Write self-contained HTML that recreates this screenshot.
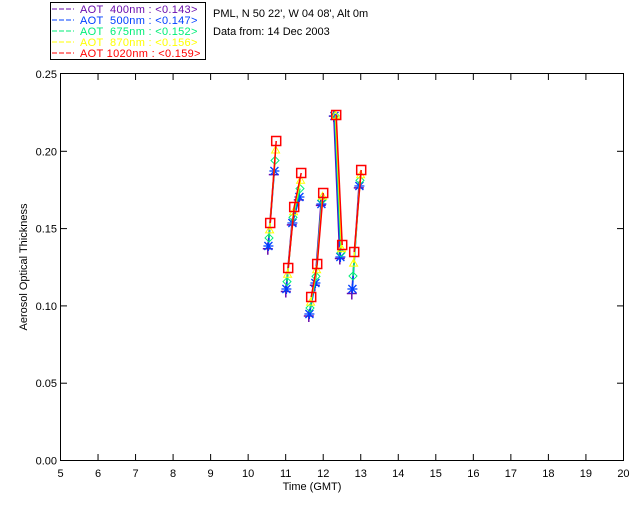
<!DOCTYPE html>
<html><head><meta charset="utf-8"><style>
html,body{margin:0;padding:0;background:#fff;width:640px;height:512px;overflow:hidden}
svg{display:block}
text{font-family:"Liberation Sans",sans-serif;font-size:11px}
.lg text{letter-spacing:0.3px}
</style></head><body>
<svg id="s" width="640" height="512" viewBox="0 0 640 512" xmlns="http://www.w3.org/2000/svg">
<rect x="50.5" y="2.5" width="155" height="57" fill="none" stroke="#000"/>
<g class="lg" font-size="11">
<line x1="52" y1="9" x2="74" y2="9" stroke="#6a0dad" stroke-dasharray="5,2"/><text x="80" y="13" fill="#6a0dad" xml:space="preserve">AOT  400nm : &lt;0.143&gt;</text>
<line x1="52" y1="20" x2="74" y2="20" stroke="#0040ff" stroke-dasharray="5,2"/><text x="80" y="24" fill="#0040ff" xml:space="preserve">AOT  500nm : &lt;0.147&gt;</text>
<line x1="52" y1="31" x2="74" y2="31" stroke="#00ee77" stroke-dasharray="5,2"/><text x="80" y="35" fill="#00ee77" xml:space="preserve">AOT  675nm : &lt;0.152&gt;</text>
<line x1="52" y1="42" x2="74" y2="42" stroke="#ffff00" stroke-dasharray="5,2"/><text x="80" y="46" fill="#ffff00" xml:space="preserve">AOT  870nm : &lt;0.156&gt;</text>
<line x1="52" y1="53" x2="74" y2="53" stroke="#ff0000" stroke-dasharray="5,2"/><text x="80" y="57" fill="#ff0000" xml:space="preserve">AOT 1020nm : &lt;0.159&gt;</text>
</g>
<text x="213" y="17">PML, N 50 22', W 04 08', Alt 0m</text>
<text x="213" y="35">Data from: 14 Dec 2003</text>
<rect x="60.5" y="73.5" width="563" height="387" fill="none" stroke="#000"/>
<g id="ax"></g>
<text x="312" y="490" text-anchor="middle">Time (GMT)</text>
<text transform="translate(27,267) rotate(-90)" text-anchor="middle">Aerosol Optical Thickness</text>
<g id="d"></g>
</svg>
<script>
var ns="http://www.w3.org/2000/svg",ax=document.getElementById('ax'),d=document.getElementById('d');
function el(t,a,p){var e=document.createElementNS(ns,t);for(var k in a)e.setAttribute(k,a[k]);(p||d).appendChild(e);return e;}
for(var h=5;h<=20;h++){var x=60.5+(h-5)*37.53;
 if(h>5&&h<20){el('line',{x1:x,y1:460.5,x2:x,y2:454,stroke:'#000'},ax);el('line',{x1:x,y1:73.5,x2:x,y2:80,stroke:'#000'},ax);}
 var t=el('text',{x:x,y:477,'text-anchor':'middle'},ax);t.textContent=h;}
for(var i=0;i<=5;i++){var y=460.5-i*77.3;
 if(i>0&&i<5){el('line',{x1:60.5,y1:y,x2:67,y2:y,stroke:'#000'},ax);el('line',{x1:623.5,y1:y,x2:617,y2:y,stroke:'#000'},ax);}
 var t=el('text',{x:57,y:y+4,'text-anchor':'end'},ax);t.textContent=(i*0.05).toFixed(2);}
var groups=[
 [[269,223,246],[275,141,171]],
 [[287,268,289],[293,207,223],[300,173,197]],
 [[310,297,314],[316,264,283],[322,193,204]],
 [[335,115,116],[341,245,257]],
 [[353,252,289],[360,170,186]]];
var cols=[['#6a0dad',-0.12,'plus'],['#0040ff',0,'star'],['#00ee77',0.35,'dia'],['#ffff00',0.7,'tri'],['#ff0000',1,'sq']];
cols.forEach(function(c,ci){
 groups.forEach(function(g){
  var pts=g.map(function(p){return [p[0]+(ci-2)*0.6,p[2]+(p[1]-p[2])*c[1]];});
  el('polyline',{points:pts.map(function(p){return p.join(',')}).join(' '),fill:'none',stroke:c[0],'stroke-width':1.5});
  pts.forEach(function(p){var x=p[0],y=p[1],s=c[0];
   if(c[2]=='plus')el('path',{d:'M'+(x-5)+' '+y+'h10M'+x+' '+(y-6)+'v12',stroke:s,'stroke-width':1.5,fill:'none'});
   if(c[2]=='star')el('path',{d:'M'+(x-5)+' '+y+'h10M'+x+' '+(y-5)+'v10M'+(x-4)+' '+(y-4)+'l8 8M'+(x+4)+' '+(y-4)+'l-8 8',stroke:s,'stroke-width':1.3,fill:'none'});
   if(c[2]=='dia')el('path',{d:'M'+x+' '+(y-4)+'l4 4l-4 4l-4-4z',stroke:s,fill:'none'});
   if(c[2]=='tri')el('path',{d:'M'+x+' '+(y-4)+'l4 7h-8z',stroke:s,fill:'none'});
   if(c[2]=='sq')el('rect',{x:x-4.5,y:y-4.5,width:9,height:9,stroke:s,'stroke-width':1.5,fill:'none'});
  });
 });
});
</script>
</body></html>
